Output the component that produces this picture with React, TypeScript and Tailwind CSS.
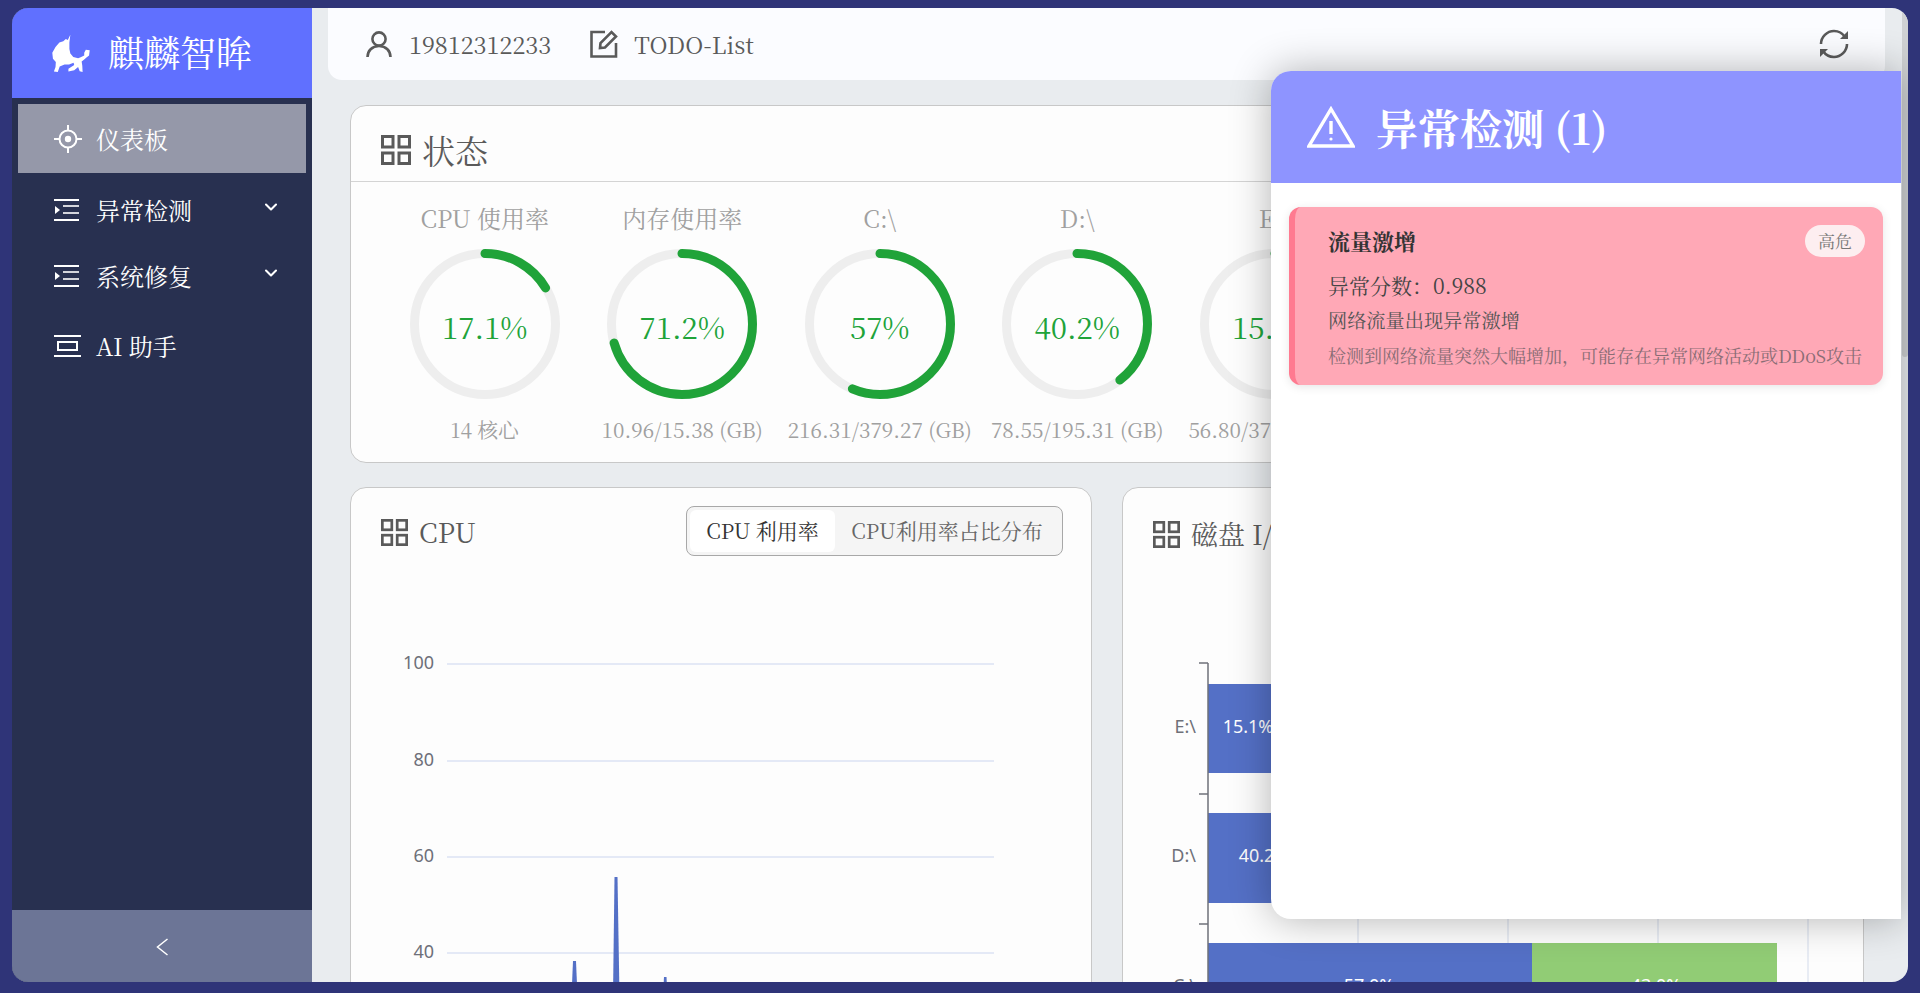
import React from 'react';
import { ChevronDown } from 'lucide-react';

const serif = 'font-["Noto_Serif_CJK_SC","Source_Han_Serif_SC","Liberation_Serif","Noto_Sans_CJK_SC",serif]';
const chartFont = 'Noto Sans, Liberation Sans, sans-serif';

function GridIcon({ className }: { className?: string }) {
  return (
    <svg viewBox="0 0 30 30" className={className} fill="none" stroke="#5a5a5a" strokeWidth="3">
      <rect x="1.5" y="1.5" width="10.5" height="10.5" />
      <rect x="18" y="1.5" width="10.5" height="10.5" />
      <rect x="1.5" y="18" width="10.5" height="10.5" />
      <rect x="18" y="18" width="10.5" height="10.5" />
    </svg>
  );
}

function IndentIcon() {
  return (
    <svg viewBox="0 0 25 22" className="h-[22px] w-[25px]" fill="#fff">
      <rect x="0" y="0" width="25" height="2" />
      <rect x="9" y="6" width="16" height="2" opacity="0.8" />
      <rect x="9" y="13" width="16" height="2" opacity="0.8" />
      <rect x="0" y="20" width="25" height="2" />
      <path d="M1 7 6 11 1 15Z" />
    </svg>
  );
}

function AimIcon() {
  return (
    <svg viewBox="0 0 28 28" className="h-[28px] w-[28px]" fill="none" stroke="#fff" strokeWidth="2">
      <circle cx="14" cy="14" r="8.5" />
      <circle cx="14" cy="14" r="3.2" fill="#fff" stroke="none" />
      <path d="M14 0v5M14 23v5M0 14h5M23 14h5" />
    </svg>
  );
}

function BoxIcon() {
  return (
    <svg viewBox="0 0 27 22" className="h-[22px] w-[27px]" fill="none" stroke="#fff" strokeWidth="2">
      <path d="M0 1h27M0 21h27" />
      <rect x="4" y="7" width="19" height="8" />
    </svg>
  );
}

function Logo() {
  return (
    <svg viewBox="16 12 124 120" className="h-[39px] w-[40px]" fill="#fff">
      <path d="M76 14 68 30 62 27 54 34 42 38 30 52 20 70 22 88 31 98 30 114 25 128 37 129 43 112 58 106 72 106 86 101 88 108 70 119 70 128 88 124 100 114 105 127 114 129 113 110 111 97 118 91 125 85 134 78 136 62 124 60 119 70 119 78 108 84 100 87 85 83 76 72 73 58 73 38Z" />
    </svg>
  );
}

function Gauge({ title, value, label, sub }: { title: string; value: number; label: string; sub: string }) {
  const r = 70.5;
  const len = 2 * Math.PI * r;
  return (
    <div className="flex w-[197.5px] shrink-0 flex-col items-center">
      <div className="h-[28px] text-[24px] leading-[28px] whitespace-nowrap text-[#a0a0a0]">{title}</div>
      <div className="relative mt-[17px] h-[150px] w-[150px]">
        <svg viewBox="0 0 150 150" className="h-[150px] w-[150px] -rotate-90">
          <circle cx="75" cy="75" r={r} fill="none" stroke="#eeeeee" strokeWidth="9" />
          <circle
            cx="75"
            cy="75"
            r={r}
            fill="none"
            stroke="#20a339"
            strokeWidth="9"
            strokeLinecap="round"
            strokeDasharray={`${(len * value) / 100 - 3} ${len}`}
          />
        </svg>
        <div className="absolute inset-0 flex items-center justify-center pt-[4px] text-[29.5px] text-[#20a339]">{label}</div>
      </div>
      <div className="mt-[18px] text-[20.8px] leading-[24px] whitespace-nowrap text-[#a0a0a0]">{sub}</div>
    </div>
  );
}

function NavItem({ icon, label, arrow, className }: { icon: React.ReactNode; label: string; arrow?: boolean; className?: string }) {
  return (
    <div className={`flex items-center text-[24px] text-white ${className ?? ''}`}>
      <div className="flex w-[47px] shrink-0 items-center pl-[5px]">{icon}</div>
      <span>{label}</span>
      {arrow && <ChevronDown className="mt-[-6px] ml-auto mr-[31px] h-[20px] w-[20px]" strokeWidth={2.5} />}
    </div>
  );
}

function CpuChart() {
  const rows = [
    { label: '100', y: 168 },
    { label: '80', y: 265 },
    { label: '60', y: 361 },
    { label: '40', y: 457 },
  ];
  return (
    <svg viewBox="0 0 740 500" className="mt-[-60px] block h-[500px] w-[740px]">
      {rows.map(row => (
        <g key={row.label}>
          <line x1="96" x2="643" y1={row.y} y2={row.y} stroke="#e4e9f6" strokeWidth="2" />
          <text x="83" y={row.y + 5} textAnchor="end" fontSize="18" fill="#6e7079" fontFamily={chartFont}>
            {row.label}
          </text>
        </g>
      ))}
      <path d="M222 465h3l1.5 35h-6z" fill="#5470c6" />
      <path d="M263.5 381h3l2 119h-6.5z" fill="#5470c6" />
      <path d="M313 481h2.5l1 19h-4.5z" fill="#5470c6" />
    </svg>
  );
}

function DiskChart() {
  return (
    <svg viewBox="0 0 740 500" className="mt-[-60px] block h-[500px] w-[740px]" fontFamily={chartFont}>
      {[235, 385, 535, 685].map(x => (
        <line key={x} x1={x} x2={x} y1="167" y2="500" stroke="#e0e6f1" strokeWidth="1.5" />
      ))}
      <rect x="85" y="188" width="86" height="89" fill="#5470c6" />
      <rect x="85" y="317" width="229" height="90" fill="#5470c6" />
      <rect x="85" y="447" width="324" height="53" fill="#5470c6" />
      <rect x="409" y="447" width="245" height="53" fill="#91cc75" />
      <line x1="85" x2="85" y1="167" y2="500" stroke="#6e7079" strokeWidth="1.5" />
      {[167, 298, 428].map(y => (
        <line key={y} x1="76" x2="85" y1={y} y2={y} stroke="#6e7079" strokeWidth="1.5" />
      ))}
      <text x="73" y="237" textAnchor="end" fontSize="18" fill="#6e7079">E:\</text>
      <text x="73" y="366" textAnchor="end" fontSize="18" fill="#6e7079">D:\</text>
      <text x="73" y="496" textAnchor="end" fontSize="18" fill="#6e7079">C:\</text>
      <text x="125" y="237" textAnchor="middle" fontSize="18" fill="#fff">15.1%</text>
      <text x="141" y="366" textAnchor="middle" fontSize="18" fill="#fff">40.2%</text>
      <text x="246" y="496" textAnchor="middle" fontSize="18" fill="#fff">57.0%</text>
      <text x="533" y="496" textAnchor="middle" fontSize="18" fill="#fff">43.0%</text>
    </svg>
  );
}

export default function App() {
  return (
    <div className={`h-[993px] w-[1920px] overflow-hidden bg-[#2f3478] pt-[8px] pr-[12px] pb-[11px] pl-[12px] ${serif}`}>
      <div className="relative flex h-full overflow-hidden rounded-[16px] bg-[#e9ecef]">
        <aside className="flex w-[300px] shrink-0 flex-col bg-[#283050]">
          <div className="flex h-[90px] shrink-0 items-center bg-[#6070ff] pl-[39px]">
            <Logo />
            <span className="ml-[17px] mt-[-3px] text-[36px] text-white">麒麟智眸</span>
          </div>
          <div className="px-[6px] pt-[6px]">
            <NavItem icon={<AimIcon />} label="仪表板" className="h-[69px] bg-[#9598a9] pl-[31px]" />
          </div>
          <NavItem icon={<IndentIcon />} label="异常检测" arrow className="mt-[3px] h-[68px] pl-[37px]" />
          <NavItem icon={<IndentIcon />} label="系统修复" arrow className="h-[64px] pl-[37px]" />
          <NavItem icon={<BoxIcon />} label="AI 助手" className="mt-[2px] h-[72px] pl-[37px]" />
          <div className="mt-auto flex h-[72px] items-center justify-center bg-[#6c7596] pt-[1px]">
            <svg viewBox="0 0 12 18" className="h-[18px] w-[12px]" fill="none" stroke="#fff" strokeWidth="1.5">
              <path d="M11.5 1 1.5 9l10 8" />
            </svg>
          </div>
        </aside>

        <main className="relative flex-1 overflow-hidden">
          <div className="absolute top-0 right-0 h-[349px] w-[6px] rounded bg-[#cfd1d3]" />
          <div className="ml-[16px] mr-[23px] flex h-[72px] items-center rounded-b-[14px] bg-[#fbfcff] pr-[36px] pl-[38px] text-[23.5px] text-[#5a5a5a]">
            <svg viewBox="0 0 26 26" className="h-[26px] w-[26px]" fill="none" stroke="#5a5a5a" strokeWidth="2.6">
              <circle cx="13" cy="8" r="6.6" />
              <path d="M1.5 26c0-6 4.5-11 11.5-11s11.5 5 11.5 11" />
            </svg>
            <span className="ml-[17px] pt-[1px]">19812312233</span>
            <svg viewBox="0 0 28 28" className="ml-[39px] h-[28px] w-[28px]" fill="none" stroke="#5a5a5a" strokeWidth="2.6">
              <path d="M15 2H1.5v24.5H26V13" />
              <path d="M10 18l.5-5L21.5 2l4.5 4.5L15 17.5Z" />
            </svg>
            <span className="ml-[16px] pt-[1px]">TODO-List</span>
            <svg viewBox="0 0 30 30" className="ml-auto h-[30px] w-[30px]" fill="none" stroke="#5a5a5a" strokeWidth="2.6">
              <path d="M2 15C2 8 8 2 15 2c5 0 9 3 11 6" />
              <path d="M28 15c0 7-6 13-13 13-5 0-9-3-11-6" />
              <path d="M29 2v8h-8z" fill="#5a5a5a" stroke="none" />
              <path d="M1 28v-8h8z" fill="#5a5a5a" stroke="none" />
            </svg>
          </div>

          <div className="mt-[25px] mr-[44px] ml-[38px]">
            <section className="h-[358px] overflow-hidden rounded-[16px] border border-[#c8c8c8] bg-[#fdfdfd]">
              <div className="flex h-[76px] items-center gap-[11px] border-b border-[#d4d4d4] pt-[12px] pl-[30px] text-[33px] text-[#5a5a5a]">
                <GridIcon className="h-[30px] w-[30px]" />
                <span>状态</span>
              </div>
              <div className="flex pt-[22px] pl-[35px]">
                <Gauge title="CPU 使用率" value={17.1} label="17.1%" sub="14 核心" />
                <Gauge title="内存使用率" value={71.2} label="71.2%" sub="10.96/15.38 (GB)" />
                <Gauge title="C:\" value={57} label="57%" sub="216.31/379.27 (GB)" />
                <Gauge title="D:\" value={40.2} label="40.2%" sub="78.55/195.31 (GB)" />
                <Gauge title="E:\" value={15.1} label="15.1%" sub="56.80/376.00 (GB)" />
              </div>
            </section>

            <div className="mt-[24px] grid grid-cols-2 gap-[30px]">
              <section className="h-[600px] rounded-[16px] border border-[#c8c8c8] bg-[#fdfdfd]">
                <div className="flex items-start justify-between pt-[18px] pr-[28px] pl-[30px]">
                  <div className="mt-[6px] flex items-center gap-[11px] text-[27px] text-[#5a5a5a]">
                    <GridIcon className="h-[27px] w-[27px]" />
                    <span>CPU</span>
                  </div>
                  <div className="flex h-[50px] items-center rounded-[8px] border border-[#a8a8a8] bg-[#f5f5f5] px-[3px] text-[21px] text-[#666]">
                    <span className="flex h-[42px] w-[145px] items-center justify-center rounded-[6px] bg-white text-[#333]">CPU 利用率</span>
                    <span className="flex h-[42px] w-[224px] items-center justify-center whitespace-nowrap">CPU利用率占比分布</span>
                  </div>
                </div>
                <CpuChart />
              </section>
              <section className="h-[600px] rounded-[16px] border border-[#c8c8c8] bg-[#fdfdfd]">
                <div className="flex h-[68px] items-center gap-[11px] pt-[24px] pl-[30px] text-[27px] whitespace-nowrap text-[#5a5a5a]">
                  <GridIcon className="h-[27px] w-[27px]" />
                  <span>磁盘 I/O</span>
                </div>
                <DiskChart />
              </section>
            </div>
          </div>
        </main>

        <div className="absolute top-[63px] right-[7px] h-[848px] w-[630px] overflow-hidden rounded-l-[20px] bg-white shadow-[0_0_40px_rgba(0,0,0,0.3)]">
          <div className="flex h-[112px] items-center bg-[#8e94ff] pl-[36px] text-[42px] font-bold text-white">
            <svg viewBox="0 0 48 42" className="h-[42px] w-[48px]" fill="none" stroke="#fff" strokeWidth="3.4" strokeLinejoin="miter">
              <path d="M24 3 46 40H2Z" />
              <path d="M24 15v13" />
              <circle cx="24" cy="33" r="1.6" fill="#fff" stroke="none" />
            </svg>
            <span className="ml-[21px]">异常检测 (1)</span>
          </div>
          <div className="mx-[18px] mt-[24px] h-[178px] rounded-[12px] border-l-[6px] border-[#ff7a90] bg-[#ffa8b6] pr-[18px] pl-[33px] shadow-[0_2px_10px_rgba(0,0,0,0.1)]">
            <div className="flex items-center justify-between pt-[17px]">
              <span className="text-[22px] font-bold text-[#333]">流量激增</span>
              <span className="mt-[1px] flex h-[32px] w-[60px] items-center justify-center rounded-full bg-[#fdeef0] text-[17px] text-[#777]">高危</span>
            </div>
            <div className="mt-[14px] text-[21px] leading-[28px] text-[#444]">异常分数：0.988</div>
            <div className="mt-[8px] text-[19.2px] leading-[26px] text-[#555]">网络流量出现异常激增</div>
            <div className="mt-[10px] text-[18px] leading-[24px] whitespace-nowrap text-[#8a6d75]">检测到网络流量突然大幅增加，可能存在异常网络活动或DDoS攻击</div>
          </div>
        </div>
      </div>
    </div>
  );
}
